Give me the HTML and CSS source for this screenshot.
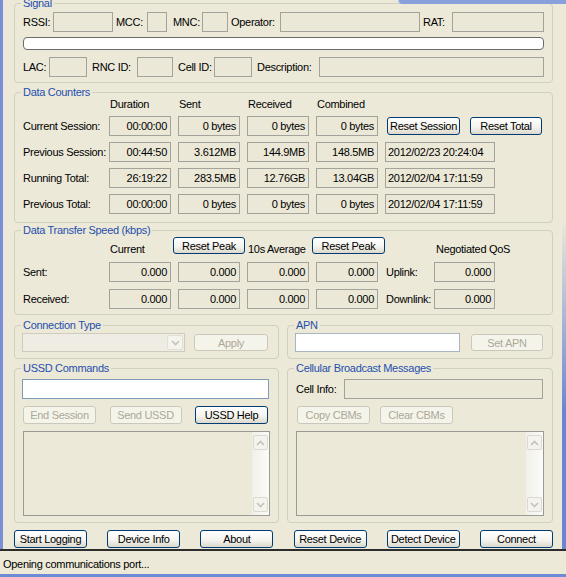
FILE: index.html
```html
<!DOCTYPE html>
<html lang="en">
<head>
  <meta charset="UTF-8">
  <title>Connection Manager</title>
  <link rel="stylesheet" href="styles.css">
</head>
<body>

  <div class="corner-window"></div>

  <div class="window">

    <fieldset class="group signal">
      <legend>Signal</legend>
      <div class="sig-row r1">
        <span class="lbl first">RSSI:</span><span class="box"></span>
        <span class="lbl">MCC:</span><span class="box"></span>
        <span class="lbl mnc">MNC:</span><span class="box"></span>
        <span class="lbl">Operator:</span><span class="box"></span>
        <span class="lbl">RAT:</span><span class="box"></span>
      </div>
      <div class="progress"></div>
      <div class="sig-row r2">
        <span class="lbl first">LAC:</span><span class="box"></span>
        <span class="lbl">RNC ID:</span><span class="box"></span>
        <span class="lbl">Cell ID:</span><span class="box"></span>
        <span class="lbl">Description:</span><span class="box"></span>
      </div>
    </fieldset>

    <fieldset class="group counters">
      <legend>Data Counters</legend>
      <div class="counter-grid">
        <span></span>
        <span class="col-head">Duration</span>
        <span class="col-head">Sent</span>
        <span class="col-head">Received</span>
        <span class="col-head">Combined</span>
        <span></span>

        <span class="row-lbl">Current Session:</span>
        <span class="box num">00:00:00</span>
        <span class="box num">0 bytes</span>
        <span class="box num">0 bytes</span>
        <span class="box num">0 bytes</span>
        <div class="btn-pair">
          <button class="btn session">Reset Session</button>
          <button class="btn total">Reset Total</button>
        </div>

        <span class="row-lbl">Previous Session:</span>
        <span class="box num">00:44:50</span>
        <span class="box num">3.612MB</span>
        <span class="box num">144.9MB</span>
        <span class="box num">148.5MB</span>
        <span class="box date">2012/02/23 20:24:04</span>

        <span class="row-lbl">Running Total:</span>
        <span class="box num">26:19:22</span>
        <span class="box num">283.5MB</span>
        <span class="box num">12.76GB</span>
        <span class="box num">13.04GB</span>
        <span class="box date">2012/02/04 17:11:59</span>

        <span class="row-lbl">Previous Total:</span>
        <span class="box num">00:00:00</span>
        <span class="box num">0 bytes</span>
        <span class="box num">0 bytes</span>
        <span class="box num">0 bytes</span>
        <span class="box date">2012/02/04 17:11:59</span>
      </div>
    </fieldset>

    <fieldset class="group transfer">
      <legend>Data Transfer Speed (kbps)</legend>
      <div class="speed-grid">
        <span></span>
        <span class="head-txt">Current</span>
        <button class="btn peak">Reset Peak</button>
        <span class="head-txt">10s Average</span>
        <button class="btn peak second">Reset Peak</button>
        <span></span>
        <span class="head-txt qos">Negotiated QoS</span>

        <span class="row-lbl">Sent:</span>
        <span class="box num">0.000</span>
        <span class="box num">0.000</span>
        <span class="box num">0.000</span>
        <span class="box num">0.000</span>
        <span class="row-lbl link">Uplink:</span>
        <span class="box num">0.000</span>

        <span class="row-lbl">Received:</span>
        <span class="box num">0.000</span>
        <span class="box num">0.000</span>
        <span class="box num">0.000</span>
        <span class="box num">0.000</span>
        <span class="row-lbl link">Downlink:</span>
        <span class="box num">0.000</span>
      </div>
    </fieldset>

    <div class="split">
      <fieldset class="group half conn">
        <legend>Connection Type</legend>
        <div class="line">
          <div class="combo">
            <span class="combo-field"></span>
            <span class="combo-arrow">
              <svg width="9" height="6" viewBox="0 0 9 6"><polyline points="1,1 4.5,4.5 8,1" fill="none" stroke="#c6c3b6" stroke-width="1.6"/></svg>
            </span>
          </div>
          <button class="btn apply" disabled>Apply</button>
        </div>
      </fieldset>

      <fieldset class="group half conn">
        <legend>APN</legend>
        <div class="line">
          <span class="edit apn"></span>
          <button class="btn set-apn" disabled>Set APN</button>
        </div>
      </fieldset>
    </div>

    <div class="split tall">
      <fieldset class="group half ussd">
        <legend>USSD Commands</legend>
        <span class="edit wide"></span>
        <div class="btn-row spread">
          <button class="btn w73" disabled>End Session</button>
          <button class="btn w72" disabled>Send USSD</button>
          <button class="btn w73">USSD Help</button>
        </div>
        <div class="listbox">
          <div class="list-area"></div>
          <div class="scrollbar">
            <span class="sb-btn">
              <svg width="9" height="6" viewBox="0 0 9 6"><polyline points="1,5 4.5,1.5 8,5" fill="none" stroke="#c6c3b6" stroke-width="1.6"/></svg>
            </span>
            <span class="sb-btn">
              <svg width="9" height="6" viewBox="0 0 9 6"><polyline points="1,1 4.5,4.5 8,1" fill="none" stroke="#c6c3b6" stroke-width="1.6"/></svg>
            </span>
          </div>
        </div>
      </fieldset>

      <fieldset class="group half ussd cbm">
        <legend>Cellular Broadcast Messages</legend>
        <div class="cell-info">
          <span class="cell-lbl">Cell Info:</span>
          <span class="box"></span>
        </div>
        <div class="btn-row">
          <button class="btn w73 copy" disabled>Copy CBMs</button>
          <button class="btn w73 clear" disabled>Clear CBMs</button>
        </div>
        <div class="listbox">
          <div class="list-area"></div>
          <div class="scrollbar">
            <span class="sb-btn">
              <svg width="9" height="6" viewBox="0 0 9 6"><polyline points="1,5 4.5,1.5 8,5" fill="none" stroke="#c6c3b6" stroke-width="1.6"/></svg>
            </span>
            <span class="sb-btn">
              <svg width="9" height="6" viewBox="0 0 9 6"><polyline points="1,1 4.5,4.5 8,1" fill="none" stroke="#c6c3b6" stroke-width="1.6"/></svg>
            </span>
          </div>
        </div>
      </fieldset>
    </div>

    <div class="bottom-buttons">
      <button class="btn w73">Start Logging</button>
      <button class="btn w73">Device Info</button>
      <button class="btn w73">About</button>
      <button class="btn w73">Reset Device</button>
      <button class="btn w73">Detect Device</button>
      <button class="btn w73">Connect</button>
    </div>

  </div>

  <div class="status-bar">Opening communications port...</div>

</body>
</html>
```

FILE: styles.css
```css
:root {
  --face: #ece9d8;
  --legend: #1f4fae;
  --group-border: #d0d0bf;
  --field-border: #a3a29b;
  --field-bg: #ebe8d7;
  --edit-border: #7f9db9;
  --btn-border: #003c74;
  --dis-border: #cbc8bb;
  --dis-text: #aca899;
  --frame: #7b8fd6;
}

* {
  box-sizing: border-box;
}

body {
  margin: 0;
  width: 566px;
  height: 577px;
  overflow: hidden;
  position: relative;
  display: flex;
  flex-direction: column;
  background-color: var(--face);
  border-bottom: 3px solid #6f8ad4;
  font-family: "Liberation Sans", Arial, sans-serif;
  font-size: 11px;
  letter-spacing: -0.3px;
  color: #000;
}

/* edge of another window peeking in at the top */
.corner-window {
  position: absolute;
  top: 0;
  left: 398px;
  right: 0;
  height: 4px;
  background-color: #8aa0dd;
  border-left: 1px solid #b9c6ee;
  border-bottom-left-radius: 4px;
}

.window {
  height: 549px;
  display: flex;
  flex-direction: column;
  border-left: 3px solid var(--frame);
  padding: 0 13px 0 11px;
  background: linear-gradient(to bottom, transparent 40%, #6a86d2 75%) right / 4px 100% no-repeat;
}

/* group boxes */

.group {
  margin: 0;
  min-width: 0;
  border: 1px solid var(--group-border);
  border-radius: 4px;
  padding: 0 8px 6px 8px;
}

.group legend {
  color: var(--legend);
  padding: 0 2px;
  margin-left: -2px;
  height: 12px;
  line-height: 12px;
}

.signal {
  margin-top: -3px;
  padding-top: 3px;
  padding-bottom: 5px;
}

.counters {
  margin-top: 3px;
  padding-bottom: 8px;
}

.transfer {
  margin-top: 1px;
  padding-top: 1px;
  padding-bottom: 5px;
}

/* fields */

.box {
  display: block;
  height: 20px;
  line-height: 18px;
  border: 1px solid var(--field-border);
  background-color: var(--field-bg);
  white-space: nowrap;
  overflow: hidden;
}

.box.num {
  text-align: right;
  padding-right: 3px;
}

.box.date {
  width: 110px;
  padding-left: 2px;
}

.edit {
  display: block;
  height: 20px;
  border: 1px solid var(--edit-border);
  background-color: #fff;
}

.lbl {
  padding-left: 3px;
  white-space: nowrap;
}

.lbl.first {
  padding-left: 0;
}

.lbl.mnc {
  padding-left: 6px;
}

/* signal */

.sig-row {
  display: grid;
  height: 20px;
  align-items: center;
}

.sig-row.r1 {
  grid-template-columns: 30px 60px 34px 20px 35px 26px 52px 140px 32px 1fr;
}

.sig-row.r2 {
  grid-template-columns: 26px 38px 50px 36px 41px 38px 67px 1fr;
}

.sig-row.r2 .lbl {
  padding-left: 5px;
}

.sig-row.r2 .lbl.first {
  padding-left: 0;
}

.progress {
  height: 13px;
  margin: 5px 0 7px;
  border: 1px solid #6b6b6b;
  border-radius: 4px;
  background-color: #fff;
}

/* counters */

.counter-grid {
  display: grid;
  grid-template-columns: 79px repeat(4, 62px) 1fr;
  grid-template-rows: 12px repeat(4, 20px);
  column-gap: 7px;
  row-gap: 6px;
  align-items: center;
}

.col-head {
  padding-left: 1px;
  line-height: 12px;
}

.row-lbl {
  white-space: nowrap;
}

.btn-pair {
  display: flex;
  align-items: center;
  padding: 0 2px;
}

.btn-pair .session {
  width: 73px;
}

.btn-pair .total {
  width: 72px;
  margin-left: auto;
}

/* speed */

.speed-grid {
  display: grid;
  grid-template-columns: 79px repeat(4, 62px) 42px 61px;
  grid-template-rows: 18px 20px 20px;
  column-gap: 7px;
  row-gap: 7px;
  align-items: center;
}

.head-txt {
  align-self: end;
  line-height: 12px;
  padding-left: 1px;
  white-space: nowrap;
}

.head-txt.qos {
  padding-left: 2px;
}

.btn.peak {
  width: 72px;
  height: 17px;
  margin-left: -5px;
  align-self: start;
}

.btn.peak.second {
  width: 73px;
  margin-left: -4px;
}

.row-lbl.link {
  padding-left: 1px;
}

/* connection / apn */

.split {
  display: flex;
  gap: 8px;
  margin-top: 4px;
}

.split.tall {
  margin-top: 3px;
}

.group.half {
  padding-left: 7px;
  padding-right: 9px;
}

.group.half legend {
  margin-left: -1px;
}

.split .half:first-child {
  width: 265px;
}

.split .half:last-child {
  flex: 1;
}

.conn {
  padding-top: 2px;
}

.line {
  display: flex;
  align-items: center;
  height: 19px;
}

.combo {
  width: 163px;
  height: 19px;
  display: flex;
  border: 1px solid #cfccbf;
  background-color: #eeece3;
}

.combo-field {
  flex: 1;
}

.combo-arrow {
  width: 16px;
  display: flex;
  align-items: center;
  justify-content: center;
  margin: 1px;
  border: 1px solid #e2e0d5;
  border-radius: 2px;
  background-color: #f4f3ee;
}

.btn.apply {
  width: 74px;
  height: 17px;
  margin-left: 9px;
}

.edit.apn {
  width: 165px;
  height: 19px;
  border-color: #a9b5c0;
}

.btn.set-apn {
  width: 72px;
  height: 17px;
  margin-left: 11px;
}

/* ussd / cbm */

.ussd {
  padding-top: 5px;
}

.btn-row {
  display: flex;
  margin-top: 7px;
  padding: 0 1px;
}

.btn-row.spread {
  justify-content: space-between;
}

.btn.copy {
  margin-left: 1px;
}

.btn.clear {
  margin-left: 10px;
}

.cell-info {
  display: flex;
  align-items: center;
}

.cell-lbl {
  width: 49px;
  padding-left: 1px;
}

.cell-info .box {
  flex: 1;
}

.listbox {
  height: 85px;
  margin: 7px -1px 0 1px;
  display: flex;
  border: 1px solid #9a9a96;
  background-color: var(--face);
}

.list-area {
  flex: 1;
}

.scrollbar {
  width: 17px;
  display: flex;
  flex-direction: column;
  justify-content: space-between;
  padding: 3px 1px;
  background: linear-gradient(to right, #f1f0e9, #fbfbf8);
}

.sb-btn {
  height: 15px;
  display: flex;
  align-items: center;
  justify-content: center;
  border: 1px solid #dcdad0;
  border-radius: 2px;
  background-color: #f4f3ee;
}

/* buttons */

.btn {
  height: 18px;
  padding: 0;
  font: inherit;
  letter-spacing: inherit;
  color: #000;
  border: 1px solid var(--btn-border);
  border-radius: 3px;
  background: linear-gradient(#ffffff, #f5f4ef 55%, #dcd8cc);
  white-space: nowrap;
}

.btn:disabled {
  color: var(--dis-text);
  border-color: var(--dis-border);
  background: #f5f4ea;
}

.btn.w72 {
  width: 72px;
}

.btn.w73 {
  width: 73px;
}

.bottom-buttons {
  display: flex;
  justify-content: space-between;
  margin-top: 7px;
}

/* status bar */

.status-bar {
  flex: 1;
  border-top: 2px solid #2c2c2c;
  padding: 7px 0 0 3px;
  line-height: 12px;
}
```
